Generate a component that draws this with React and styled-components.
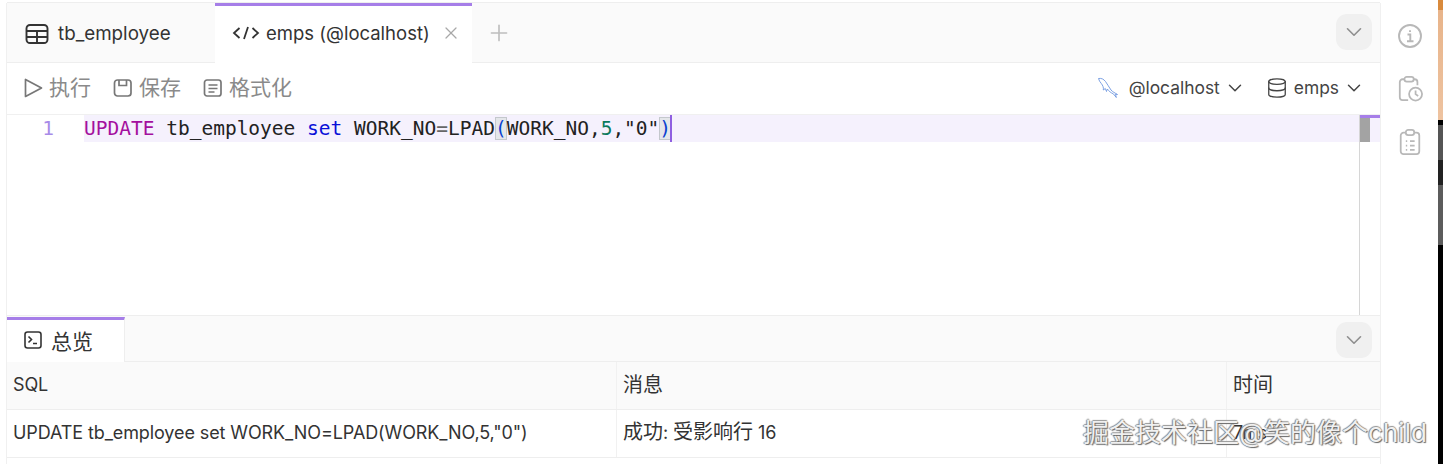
import React from 'react';
import styled, { createGlobalStyle } from 'styled-components';
import { ChevronDown, Plus, X, Database } from 'lucide-react';

const Global = createGlobalStyle`
	html, body { margin: 0; padding: 0; background: #fff; }
	body { overflow: hidden; font-family: Inter, "Noto Sans CJK SC", sans-serif; color: #333; }
`;

const Page = styled.div`
	position: relative;
	display: flex;
	width: 1443px;
	height: 464px;
	overflow: hidden;
	background: #fff;
`;
const LeftGutter = styled.div`
	width: 6px;
	flex: none;
	margin-top: 3px;
	border-right: 1px solid #f0f0f0;
`;
const Main = styled.div`
	width: 1373px;
	flex: none;
	display: flex;
	flex-direction: column;
	padding-top: 2px;
`;
const SideBar = styled.div`
	width: 58px;
	flex: none;
	margin-top: 3px;
	display: flex;
	flex-direction: column;
	align-items: center;
	gap: 27px;
	padding: 20px 0 0 1px;
	border-left: 1px solid #f0f0f0;
	box-sizing: border-box;
	color: #b8b8b8;
`;
const BackdropStrip = styled.div`
	width: 5px;
	flex: none;
	display: flex;
	flex-direction: column;
	background: #000;
`;
const StripPart = styled.div`
	height: ${p => p.$h}px;
	background: ${p => p.$bg};
`;

const TabBar = styled.div`
	height: 61px;
	flex: none;
	display: flex;
	background: #fafafa;
	border-top: 1px solid #eee;
	border-bottom: 1px solid #eee;
	box-sizing: border-box;
`;
const Tab = styled.div`
	width: ${p => p.$w}px;
	display: flex;
	align-items: center;
	box-sizing: border-box;
	padding: 0 0 ${p => (p.$active ? 4 : 1)}px ${p => p.$pad}px;
	margin-bottom: ${p => (p.$active ? -1 : 0)}px;
	background: ${p => (p.$active ? '#fff' : '#fafafa')};
	border-top: 3px solid ${p => (p.$active ? '#a67ee8' : 'transparent')};
	font-size: ${p => (p.$active ? 18.5 : 18.8)}px;
	color: #333;
	white-space: nowrap;
`;
const TabLabel = styled.span`
	margin-left: ${p => p.$gap}px;
`;
const TabClose = styled(X)`
	margin-left: 11px;
	color: #a8a8a8;
`;
const AddTab = styled.div`
	display: flex;
	align-items: center;
	padding: 0 0 0 14px;
	color: #bdbdbd;
`;
const Collapse = styled.div`
	margin: ${p => p.$m};
	width: 36px;
	height: 36px;
	flex: none;
	display: flex;
	align-items: center;
	justify-content: center;
	border-radius: 11px;
	background: #f0f0f0;
	color: #8f8f8f;
`;
const Spacer = styled.div`
	flex: 1;
`;

const Toolbar = styled.div`
	height: 52px;
	flex: none;
	display: flex;
	align-items: center;
	padding: 0 15px 2px 16px;
	border-bottom: 1px solid #f0f0f0;
	box-sizing: border-box;
`;
const ToolButton = styled.div`
	display: flex;
	align-items: center;
	gap: 6px;
	margin-right: 22px;
	font-size: 21px;
	line-height: 28px;
	color: #8a8a8a;
	svg { color: #777; }
`;
const ConnButton = styled.div`
	display: flex;
	align-items: center;
	margin-left: ${p => p.$ml}px;
	font-size: 17.4px;
	color: #444;
`;
const ConnLabel = styled.span`
	margin: 0 4px 0 ${p => p.$gap}px;
`;

const Editor = styled.div`
	position: relative;
	height: 200px;
	flex: none;
`;
const CodeLine = styled.div`
	display: flex;
	height: 27px;
	line-height: 27px;
	font-family: "DejaVu Sans Mono", monospace;
	font-size: 19.5px;
	white-space: pre;
`;
const LineNumber = styled.div`
	width: 77px;
	flex: none;
	padding-right: 30px;
	box-sizing: border-box;
	text-align: right;
	color: #a88be8;
	background: #fff;
`;
const CodeText = styled.div`
	flex: 1;
	background: #f5f1fd;
	color: #222;
`;
const Token = styled.span`
	color: ${p => p.$c};
`;
const Bracket = styled.span`
	color: #0a3fd0;
	background: #e4e6ea;
	box-shadow: inset 0 0 0 1px #c4c8cc;
`;
const Caret = styled.span`
	display: inline-block;
	width: 2px;
	height: 27px;
	margin-left: -1px;
	vertical-align: top;
	background: #8f5fe0;
`;
const ScrollRail = styled.div`
	position: absolute;
	top: 0;
	right: 0;
	bottom: 0;
	width: 21px;
	border-left: 1px solid #d6d6d6;
	box-sizing: border-box;
`;
const ScrollMark = styled.div`
	height: 3px;
	background: #a67ee8;
`;
const ScrollThumb = styled.div`
	width: 10px;
	height: 24px;
	background: #a3a3a3;
`;

const BottomBar = styled.div`
	height: 47px;
	flex: none;
	display: flex;
	background: #fafafa;
	border-top: 1px solid #eee;
	border-bottom: 1px solid #eee;
	box-sizing: border-box;
`;
const BottomTab = styled.div`
	width: 118px;
	margin: 1px 0 -1px;
	display: flex;
	align-items: center;
	gap: 8px;
	padding: 0 0 3px 16px;
	box-sizing: border-box;
	background: #fff;
	border-top: 3px solid #a67ee8;
	border-right: 1px solid #eee;
	font-size: 21px;
	color: #333;
`;

const Row = styled.div`
	display: grid;
	grid-template-columns: 610px 610px 153px;
	height: 48px;
	flex: none;
	background: ${p => (p.$head ? '#fafafa' : '#fff')};
	border-bottom: 1px solid #eee;
	box-sizing: border-box;
`;
const Cell = styled.div`
	display: flex;
	align-items: center;
	padding: 0 0 2px 6px;
	border-right: ${p => (p.$last ? 'none' : '1px solid #f1f1f1')};
	font-size: 18px;
	line-height: 24px;
	letter-spacing: -0.1px;
	color: #333;
	white-space: pre;
	overflow: hidden;
`;
const Cjk = styled.span`
	font-size: 20px;
	letter-spacing: 0;
`;
const Watermark = styled.div`
	position: absolute;
	left: 1083px;
	top: 417px;
	font-size: 26px;
	line-height: 32px;
	color: #f0f0f0;
	white-space: nowrap;
	text-shadow: 1px 1px 1px #666, -1px 0 1px #888, 0 -1px 1px #999;
`;

const TableIcon = () => (
	<svg width="24" height="24" viewBox="0 0 24 24" fill="none" stroke="#333" strokeWidth="1.9">
		<rect x="1.5" y="3" width="21" height="18" rx="3.5" />
		<path d="M1.5 9h21M1.5 15h21M12 9v12" />
	</svg>
);
const CodeIcon = () => (
	<svg width="28" height="24" viewBox="0 0 28 24" fill="none" stroke="#333" strokeWidth="1.8">
		<path d="M7.5 7 2 12l5.5 5M20.5 7 26 12l-5.500 5M16 6l-4 12" />
	</svg>
);
const PlayIcon = () => (
	<svg width="20" height="22" viewBox="0 0 20 22" fill="none" stroke="#777" strokeWidth="1.7" strokeLinejoin="round">
		<path d="M2.500 2.500v17l16-8.500z" />
	</svg>
);
const SaveIcon = () => (
	<svg width="20" height="20" viewBox="0 0 20 20" fill="none" stroke="#777" strokeWidth="1.7">
		<rect x="1.500" y="2" width="16.500" height="16" rx="3" />
		<path d="M6 2v5.500h7.500V2" />
	</svg>
);
const FormatIcon = () => (
	<svg width="20" height="20" viewBox="0 0 20 20" fill="none" stroke="#777" strokeWidth="1.7">
		<rect x="1.500" y="2" width="16.500" height="16" rx="2.500" />
		<path d="M5.500 7h9M5.500 10.500h9M5.500 14h6" />
	</svg>
);
const DolphinIcon = () => (
	<svg width="22" height="22" viewBox="0 0 22 22" fill="none" stroke="#6f97e0" strokeWidth="0.9">
		<path d="M1.500 1.500c3-.5 5 .5 7 3 2 2.500 3.500 6 5.500 8.500 1.500 1.800 4 3 6.500 4.500l-2-.3.800 3.300-3-3.700c-2.500-1-4.500-2.800-6-4.800l-.8 2.500-1.200-3-2 1.500c.5-2.500-.5-4.500-2-6.500C3 5 2 3.500 1.500 1.500Z" />
	</svg>
);
const TerminalIcon = () => (
	<svg width="20" height="20" viewBox="0 0 20 20" fill="none" stroke="#333" strokeWidth="1.600">
		<rect x="2" y="2" width="16" height="16" rx="2.500" />
		<path d="m5.500 6.500 3 3-3 3M10 13.500h4" />
	</svg>
);
const InfoIcon = () => (
	<svg width="26" height="26" viewBox="0 0 26 26" fill="none" stroke="currentColor" strokeWidth="1.900">
		<circle cx="13" cy="13" r="11" />
		<path d="M10.500 11.500H13.300V18M10 18.200h6.500M13 7.200v1.800" />
	</svg>
);
const ClipboardClockIcon = () => (
	<svg width="26" height="26" viewBox="0 0 28 28" fill="none" stroke="currentColor" strokeWidth="1.900">
		<path d="M8 3.500H6a3 3 0 0 0-3 3V23a3 3 0 0 0 3 3h6M18 3.500h1a3 3 0 0 1 3 3V10" />
		<rect x="8" y="1" width="10" height="5" rx="2.500" />
		<circle cx="20" cy="19.500" r="7" />
		<path d="M20 15.500v4l2.800 2" />
	</svg>
);
const ClipboardListIcon = () => (
	<svg width="24" height="26" viewBox="0 0 24 28" fill="none" stroke="currentColor" strokeWidth="1.900">
		<rect x="2" y="4" width="20" height="23" rx="3" />
		<rect x="7.500" y="1" width="9" height="5.500" rx="2.500" fill="#fff" />
		<path d="M7.500 13h1.500M12 13h5M7.500 18h1.500M12 18h5M7.500 22.500h1.500M12 22.500h5" />
	</svg>
);

const App = () => {
	return (
		<Page>
			<Global />
			<LeftGutter />
			<Main>
				<TabBar>
					<Tab $w={208} $pad={18}>
						<TableIcon />
						<TabLabel $gap={9}>tb_employee</TabLabel>
					</Tab>
					<Tab $w={257} $pad={17} $active>
						<CodeIcon />
						<TabLabel $gap={6}>emps (@localhost)</TabLabel>
						<TabClose size={20} strokeWidth={1.5} />
					</Tab>
					<AddTab><Plus size={26} strokeWidth={1.5} /></AddTab>
					<Spacer />
					<Collapse $m="11px 8px 0 0"><ChevronDown size={26} strokeWidth={1.5} /></Collapse>
				</TabBar>
				<Toolbar>
					<ToolButton><PlayIcon />执行</ToolButton>
					<ToolButton><SaveIcon />保存</ToolButton>
					<ToolButton><FormatIcon />格式化</ToolButton>
					<Spacer />
					<ConnButton>
						<DolphinIcon />
						<ConnLabel $gap={10}>@localhost</ConnLabel>
						<ChevronDown size={22} strokeWidth={1.6} />
					</ConnButton>
					<ConnButton $ml={20}>
						<Database size={22} strokeWidth={1.4} />
						<ConnLabel $gap={6}>emps</ConnLabel>
						<ChevronDown size={22} strokeWidth={1.6} />
					</ConnButton>
				</Toolbar>
				<Editor>
					<CodeLine>
						<LineNumber>1</LineNumber>
						<CodeText>
							<Token $c="#a4109e">UPDATE</Token> tb_employee <Token $c="#0a10d8">set</Token> WORK_NO<Token $c="#666">=</Token>LPAD<Bracket>(</Bracket>WORK_NO,<Token $c="#0c7a5c">5</Token>,"0"<Bracket>)</Bracket><Caret />
						</CodeText>
					</CodeLine>
					<ScrollRail>
						<ScrollMark />
						<ScrollThumb />
					</ScrollRail>
				</Editor>
				<BottomBar>
					<BottomTab><TerminalIcon />总览</BottomTab>
					<Spacer />
					<Collapse $m="6px 8px 0 0"><ChevronDown size={26} strokeWidth={1.5} /></Collapse>
				</BottomBar>
				<Row $head>
					<Cell>SQL</Cell>
					<Cell><Cjk>消息</Cjk></Cell>
					<Cell $last><Cjk>时间</Cjk></Cell>
				</Row>
				<Row>
					<Cell>UPDATE tb_employee set WORK_NO=LPAD(WORK_NO,5,"0")</Cell>
					<Cell><span><Cjk>成功</Cjk>: <Cjk>受影响行</Cjk> 16</span></Cell>
					<Cell $last>7ms</Cell>
				</Row>
			</Main>
			<SideBar>
				<InfoIcon />
				<ClipboardClockIcon />
				<ClipboardListIcon />
			</SideBar>
			<BackdropStrip>
				<StripPart $h={10} $bg="#d98a3c" />
				<StripPart $h={110} $bg="linear-gradient(#e8b48a, #eec3a0)" />
				<StripPart $h={5} $bg="#000" />
				<StripPart $h={35} $bg="#555" />
				<StripPart $h={25} $bg="#222" />
				<StripPart $h={60} $bg="#5c5c5c" />
			</BackdropStrip>
			<Watermark>掘金技术社区@笑的像个child</Watermark>
		</Page>
	);
};

export default App;
